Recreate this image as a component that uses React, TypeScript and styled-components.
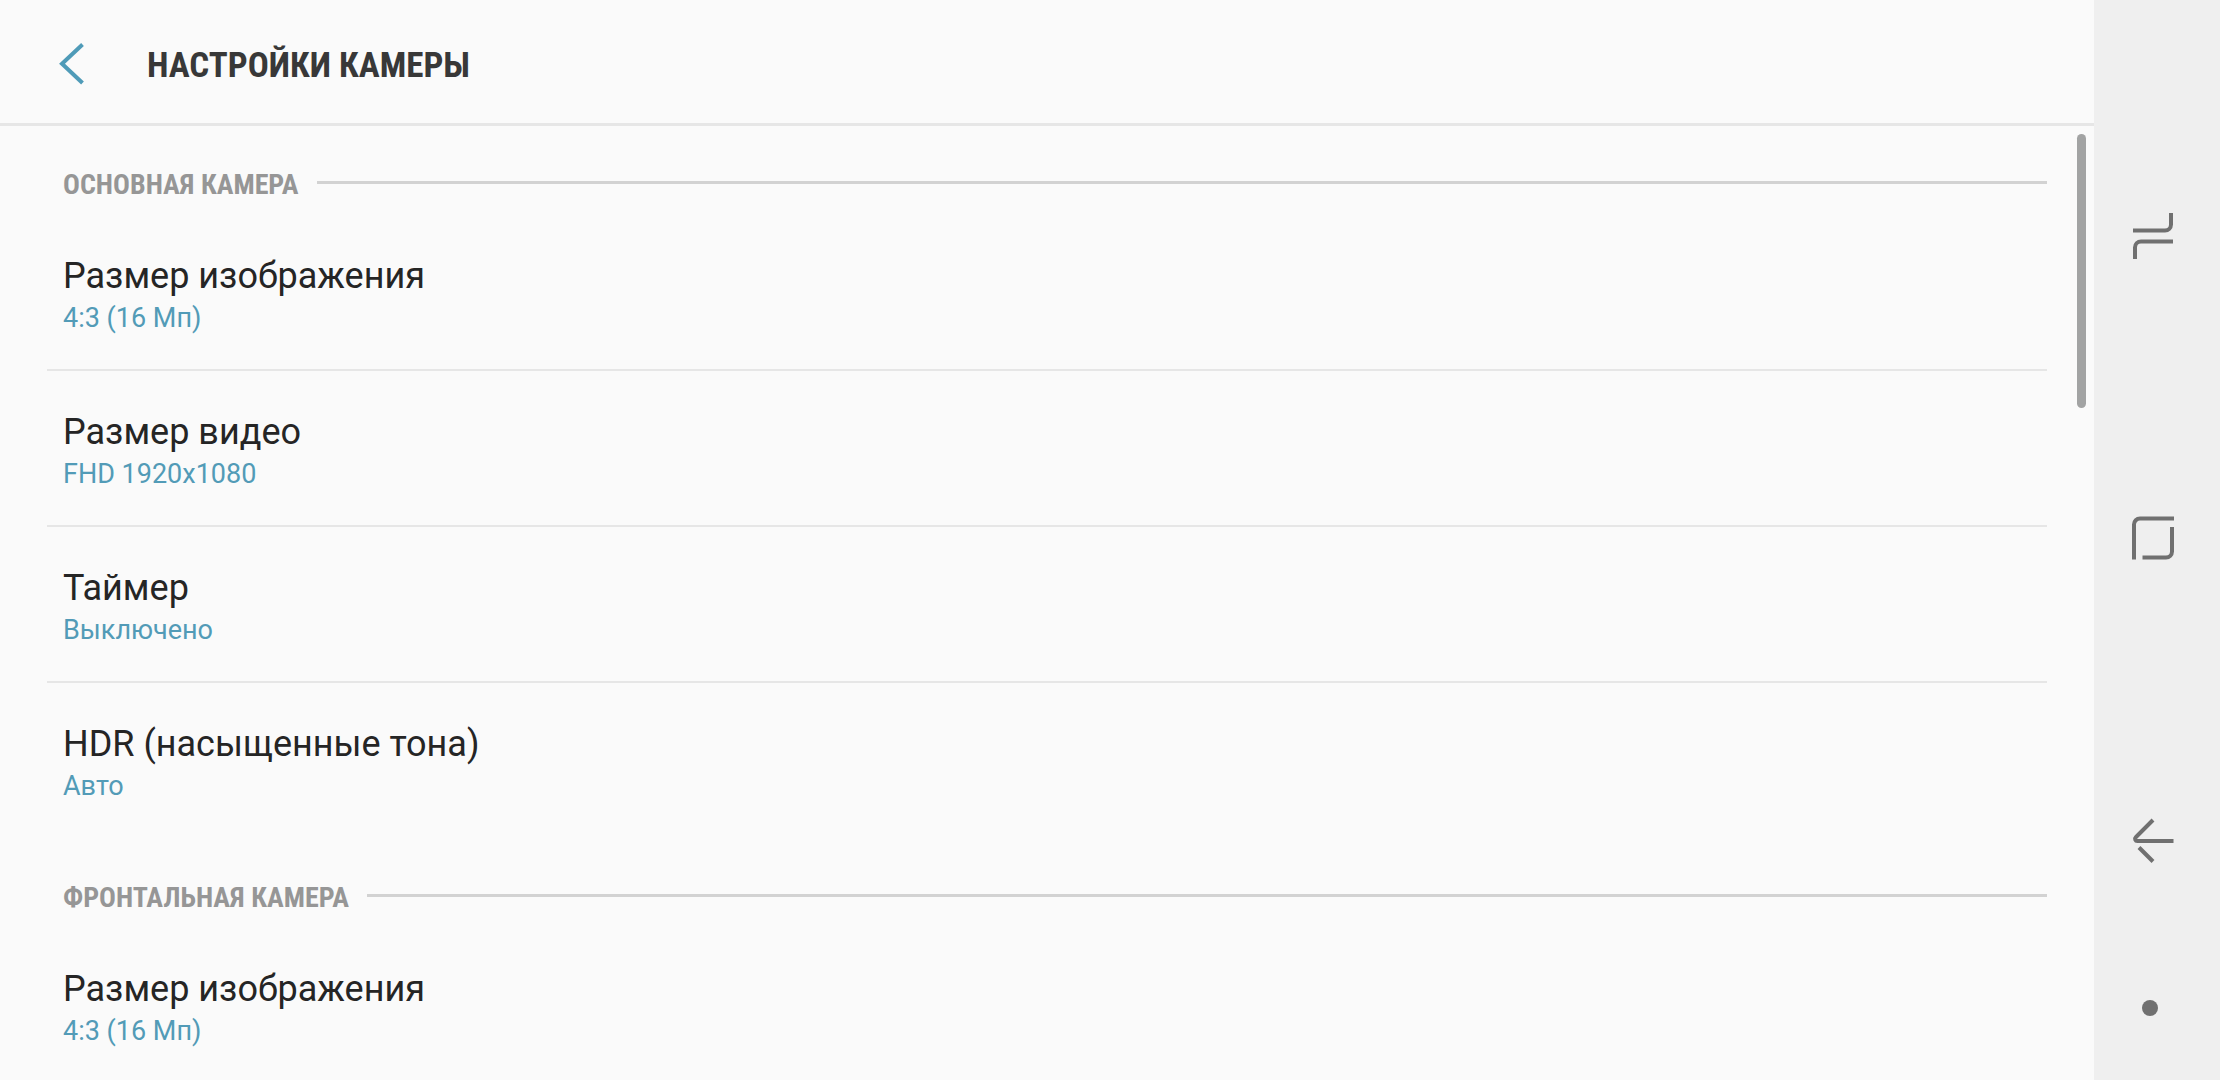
import React from "react";
import styled, { createGlobalStyle } from "styled-components";

const GlobalStyle = createGlobalStyle`
  *, *::before, *::after { box-sizing: border-box; }
  body {
    margin: 0;
    background: #fafafa;
    font-family: Roboto, "Noto Sans", sans-serif;
  }
  h1, h2, ul { margin: 0; padding: 0; }
  button { font: inherit; border: 0; background: none; padding: 0; cursor: pointer; }
`;

const Screen = styled.div`
  display: flex;
  height: 100vh;
  overflow: hidden;
`;

const Content = styled.main`
  flex: 1;
  min-width: 0;
  display: flex;
  flex-direction: column;
`;

const Header = styled.header`
  flex: none;
  display: flex;
  align-items: center;
  gap: 48px;
  padding: 32px 48px 27px;
  border-bottom: 3px solid #e6e6e6;
`;

const BackButton = styled.button`
  display: flex;
  align-items: center;
  width: 51px;
  height: 64px;
`;

const Title = styled.h1`
  padding-top: 4px;
  font-family: "Roboto Condensed", Roboto, sans-serif;
  font-size: 35px;
  line-height: 44px;
  font-weight: 700;
  color: #383838;
  text-transform: uppercase;
`;

const ScrollArea = styled.div`
  position: relative;
  flex: 1;
  min-height: 0;
  overflow: hidden;
`;

const ScrollThumb = styled.div`
  position: absolute;
  top: 8px;
  right: 8px;
  width: 9px;
  height: 274px;
  border-radius: 5px;
  background: #a2a3a3;
`;

const Section = styled.section`
  padding: 0 47px;
`;

const SectionHeader = styled.div`
  display: flex;
  align-items: flex-start;
  gap: 18px;
  height: 89px;
  padding: 41px 0 0 16px;

  &::after {
    content: "";
    flex: 1;
    height: 3px;
    margin-top: 14px;
    background: #d2d2d2;
  }
`;

const SectionTitle = styled.h2`
  font-family: "Roboto Condensed", Roboto, sans-serif;
  font-size: 28px;
  line-height: 36px;
  font-weight: 700;
  color: #969696;
  text-transform: uppercase;
`;

const List = styled.ul`
  list-style: none;
`;

const Item = styled.li`
  border-bottom: 2px solid #e6e6e6;

  &:last-child { border-bottom-color: transparent; }
`;

const Row = styled.button`
  display: flex;
  flex-direction: column;
  align-items: flex-start;
  width: 100%;
  height: 154px;
  padding: 40px 16px 0;
  text-align: left;
`;

const RowTitle = styled.span`
  font-size: 36px;
  line-height: 42px;
  color: #252525;
`;

const RowValue = styled.span`
  font-size: 27px;
  line-height: 42px;
  color: #529bb7;
`;

const NavBar = styled.nav`
  flex: none;
  display: flex;
  flex-direction: column;
  width: 126px;
  padding: 85px 8px 55px 0;
  background: #efefef;
`;

const NavButton = styled.button<{ $compact?: boolean }>`
  flex: ${(p) => (p.$compact ? "0 0 34px" : "1 1 0")};
  min-height: 0;
  display: flex;
  align-items: center;
  justify-content: center;
  color: #707070;

  svg { flex: none; }
`;

const NavIcon = ({ children }: { children: React.ReactNode }) => (
  <svg width="48" height="48" viewBox="0 0 48 48" fill="none" stroke="currentColor" strokeWidth="4" aria-hidden="true">
    {children}
  </svg>
);

const sections = [
  {
    title: "Основная камера",
    items: [
      { title: "Размер изображения", value: "4:3 (16 Мп)" },
      { title: "Размер видео", value: "FHD 1920x1080" },
      { title: "Таймер", value: "Выключено" },
      { title: "HDR (насыщенные тона)", value: "Авто" },
    ],
  },
  {
    title: "Фронтальная камера",
    items: [{ title: "Размер изображения", value: "4:3 (16 Мп)" }],
  },
];

export default function App() {
  return (
    <Screen>
      <GlobalStyle />
      <Content>
        <Header>
          <BackButton aria-label="Назад">
            <svg width="48" height="48" viewBox="0 0 48 48" fill="none" stroke="#4f9bb8" strokeWidth="4" aria-hidden="true">
              <path d="M34.5 4.5L14 23.7L34.5 43" />
            </svg>
          </BackButton>
          <Title>Настройки камеры</Title>
        </Header>
        <ScrollArea>
          {sections.map((section) => (
            <Section key={section.title}>
              <SectionHeader>
                <SectionTitle>{section.title}</SectionTitle>
              </SectionHeader>
              <List>
                {section.items.map((item) => (
                  <Item key={item.title}>
                    <Row>
                      <RowTitle>{item.title}</RowTitle>
                      <RowValue>{item.value}</RowValue>
                    </Row>
                  </Item>
                ))}
              </List>
            </Section>
          ))}
          <ScrollThumb />
        </ScrollArea>
      </Content>
      <NavBar>
        <NavButton aria-label="Последние приложения">
          <NavIcon>
            <path d="M4 18.5H36a6 6 0 0 0 6-6V1" />
            <path d="M44 29.5H12a6 6 0 0 0-6 6V47" />
          </NavIcon>
        </NavButton>
        <NavButton aria-label="Главный экран">
          <NavIcon>
            <path d="M5 45.5V10.5a6 6 0 0 1 6-6H45" />
            <path d="M43 13V37.5a6 6 0 0 1-6 6H13.5" />
          </NavIcon>
        </NavButton>
        <NavButton aria-label="Назад">
          <NavIcon>
            <path d="M24 4L6.8 21.2a2.2 2.2 0 0 0 1.6 3.8H44.5" />
            <path d="M10 31.5L24 45.5" />
          </NavIcon>
        </NavButton>
        <NavButton $compact aria-label="Скрыть панель навигации">
          <NavIcon>
            <circle cx="21" cy="24" r="8" fill="currentColor" stroke="none" />
          </NavIcon>
        </NavButton>
      </NavBar>
    </Screen>
  );
}
